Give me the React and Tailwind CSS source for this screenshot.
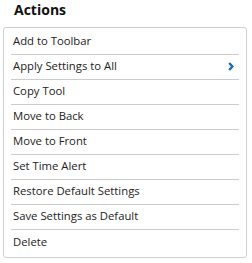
export default function App() {
  const items = [
    "Add to Toolbar",
    "Apply Settings to All",
    "Copy Tool",
    "Move to Back",
    "Move to Front",
    "Set Time Alert",
    "Restore Default Settings",
    "Save Settings as Default",
    "Delete",
  ];
  return (
    <div className="w-[252px] h-[263px] bg-white" style={{ fontFamily: '"Open Sans", sans-serif' }}>
      <div className="pl-[14px] h-[27px] text-[14px] font-bold leading-[20px] text-[#111]">Actions</div>
      <div className="ml-[3px] w-[244px] border border-[#cfcfcf] rounded-[3px] pt-[2px] pb-[2px]">
        {items.map((t, i) => (
          <div
            key={t}
            className={`mx-[7px] h-[25px] pl-[2px] pb-[1px] flex items-center justify-between text-[11.3px] text-[#222] ${i < items.length - 1 ? "border-b border-[#cccccc]" : ""}`}
          >
            <span>{t}</span>
            {t === "Apply Settings to All" && (
              <svg width="6" height="9" viewBox="0 0 6 9" className="mr-[5px]">
                <path d="M1.2 1 L4.4 4.5 L1.2 8" stroke="#1a6bbf" strokeWidth="2.4" fill="none" />
              </svg>
            )}
          </div>
        ))}
      </div>
    </div>
  );
}
